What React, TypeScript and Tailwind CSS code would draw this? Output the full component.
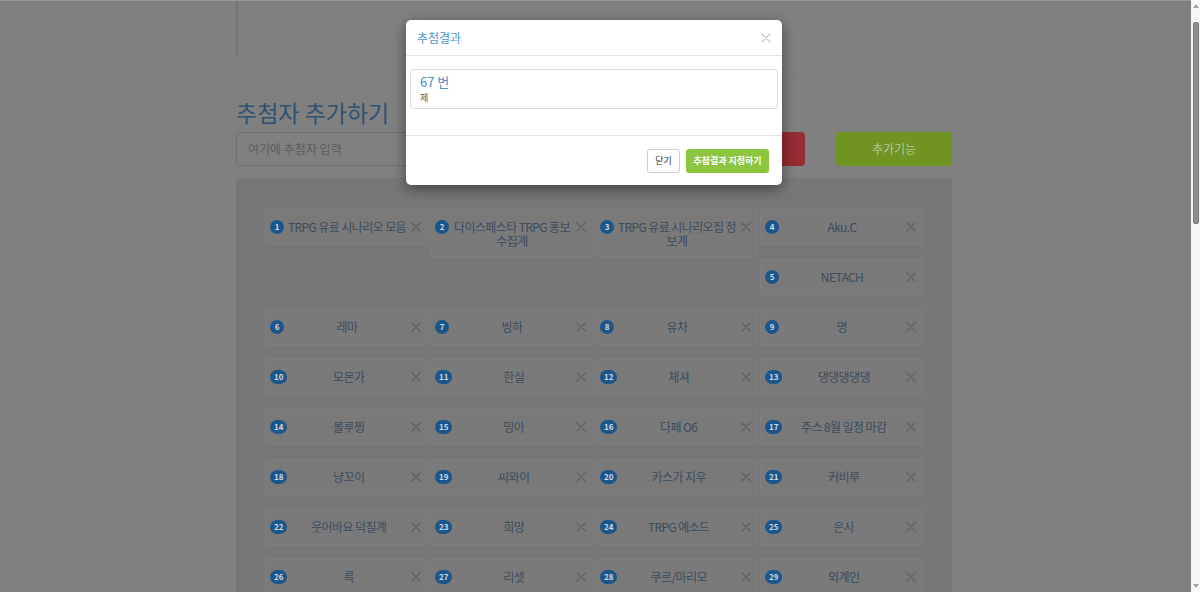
import React from 'react'

const entries = [
  'TRPG 유료 시나리오 모음',
  '다이스페스타 TRPG 홍보 수집계',
  'TRPG 유료 시나리오집 정보계',
  'Aku.C',
  'NETACH',
  '레마',
  '빙하',
  '유차',
  '명',
  '모몬가',
  '한실',
  '체셔',
  '댕댕댕댕댕',
  '몰루찡',
  '밍아',
  '다페 O6',
  '주스 8월 일정 마감',
  '냥꼬이',
  '씨와이',
  '카스가 지우',
  '커비루',
  '웃어바요 덕질계',
  '희망',
  'TRPG 예소드',
  '은사',
  '륵',
  '리셋',
  '쿠르/마리모',
  '외계인',
]

function Cross({ size, color }: { size: number; color: string }) {
  return (
    <svg width={size} height={size} viewBox="0 0 10 10" fill="none">
      <path d="M1 1L9 9M9 1L1 9" stroke={color} strokeWidth="1.1" strokeLinecap="round" />
    </svg>
  )
}

function EntryCell({ n, label }: { n: number; label: string }) {
  return (
    <div
      className={
        'flex items-start border border-[#7e7e7e] bg-[#7a7a7a] py-[8px] pl-[4px] pr-[6px]' +
        (n === 5 ? ' col-start-4' : '')
      }
    >
      <span className="flex h-[18px] items-center">
        <span className="h-[14px] min-w-[14px] rounded-full bg-[#1b568b] px-[4px] text-center text-[8px] font-bold leading-[14px] text-[#d3d9e0]">
          {n}
        </span>
      </span>
      <span className="flex-1 pl-[2px] pt-[1.5px] text-center text-[12px] leading-[14px] tracking-[-0.6px] text-[#394a5d]">
        {label}
      </span>
      <span className="ml-[3px] flex h-[18px] w-[10px] items-center justify-center">
        <Cross size={10} color="#5f5f5f" />
      </span>
    </div>
  )
}

function ResultModal() {
  return (
    <div className="w-[376px] overflow-hidden rounded-[5px] bg-white shadow-[0_4px_14px_rgba(0,0,0,0.45)]">
      <div className="flex h-[36px] items-center justify-between border-b border-[#e5e5e5] pl-[11px] pr-[11px]">
        <span className="text-[12px] text-[#4e97d1]">추첨결과</span>
        <Cross size={10} color="#c4c4c4" />
      </div>
      <div className="px-[4px] pb-[26px] pt-[13px]">
        <div className="rounded-[3px] border border-[#dedede] px-[9px] pb-[3px] pt-[3px]">
          <div className="text-[13px] leading-[18px] text-[#4a8fca]">67 번</div>
          <div className="text-[9px] leading-[14px] text-[#555]">제</div>
        </div>
      </div>
      <div className="flex h-[50px] items-center justify-end gap-[6px] border-t border-[#e5e5e5] pr-[13px]">
        <button className="h-[24px] w-[33px] rounded-[3px] border border-[#cccccc] bg-white text-[9px] text-[#333]">
          닫기
        </button>
        <button className="h-[24px] w-[83px] rounded-[3px] bg-[#8cc63f] text-[9px] font-bold text-white">
          추첨결과 지정하기
        </button>
      </div>
    </div>
  )
}

function Scrollbar() {
  return (
    <div className="flex w-[9px] flex-col items-center bg-[#f7f7f7]">
      <div className="mt-[4px] h-0 w-0 border-x-[3px] border-b-[4px] border-x-transparent border-b-[#a3a3a3]" />
      <div className="mt-[14px] h-[202px] w-[6px] rounded-[2px] border border-[#7c7c7c] bg-[#8e8e8e]" />
      <div className="flex-1" />
      <div className="mb-[4px] h-0 w-0 border-x-[3px] border-t-[4px] border-x-transparent border-t-[#a3a3a3]" />
    </div>
  )
}

export default function App() {
  return (
    <div className="flex h-[592px] w-[1200px] overflow-hidden font-['Noto_Sans_CJK_KR','Noto_Sans',sans-serif]">
      <div className="relative flex-1 overflow-hidden bg-[#808080]">
        <div className="h-px bg-[#9a9a9a]" />
        <div className="ml-[236px] w-[716px]">
          <div className="h-[55px] border-l-2 border-[#747474]" />
          <div className="mt-[21px] h-px bg-[#7a7a7a]" />

          <div className="mt-[19px] flex h-[31px] items-center">
            <h2 className="w-[453px] text-[23px] leading-[31px] text-[#2e5172]">추첨자 추가하기</h2>
            <h2 className="text-[23px] leading-[31px] text-[#2e5172]">추첨 기능</h2>
          </div>

          <div className="mt-[4px] flex h-[34px] gap-[31px]">
            <div className="flex w-[422px] items-center rounded-[4px] border border-[#6e6e6e] px-[11px] text-[12px] text-[#5c5c5c]">
              여기에 추첨자 입력
            </div>
            {/* label sits behind the modal in the screenshot */}
            <button aria-label="추첨하기" className="w-[116px] rounded-[4px] bg-[#952d33]" />
            <button className="w-[116px] rounded-[4px] bg-[#709421] text-[12px] text-[#b9c8a2]">
              추가기능
            </button>
          </div>

          <div className="mt-[12px] h-[460px] rounded-t-[4px] bg-[#777777] px-[29px] pt-[31px]">
            <div className="grid auto-rows-[36px] grid-cols-[repeat(4,163px)] items-start gap-x-[2px] gap-y-[14px]">
              {entries.map((label, i) => (
                <EntryCell key={i} n={i + 1} label={label} />
              ))}
            </div>
          </div>
        </div>

        <div className="absolute inset-0 flex items-start pl-[406px] pt-[20px]">
          <ResultModal />
        </div>
      </div>
      <Scrollbar />
    </div>
  )
}
